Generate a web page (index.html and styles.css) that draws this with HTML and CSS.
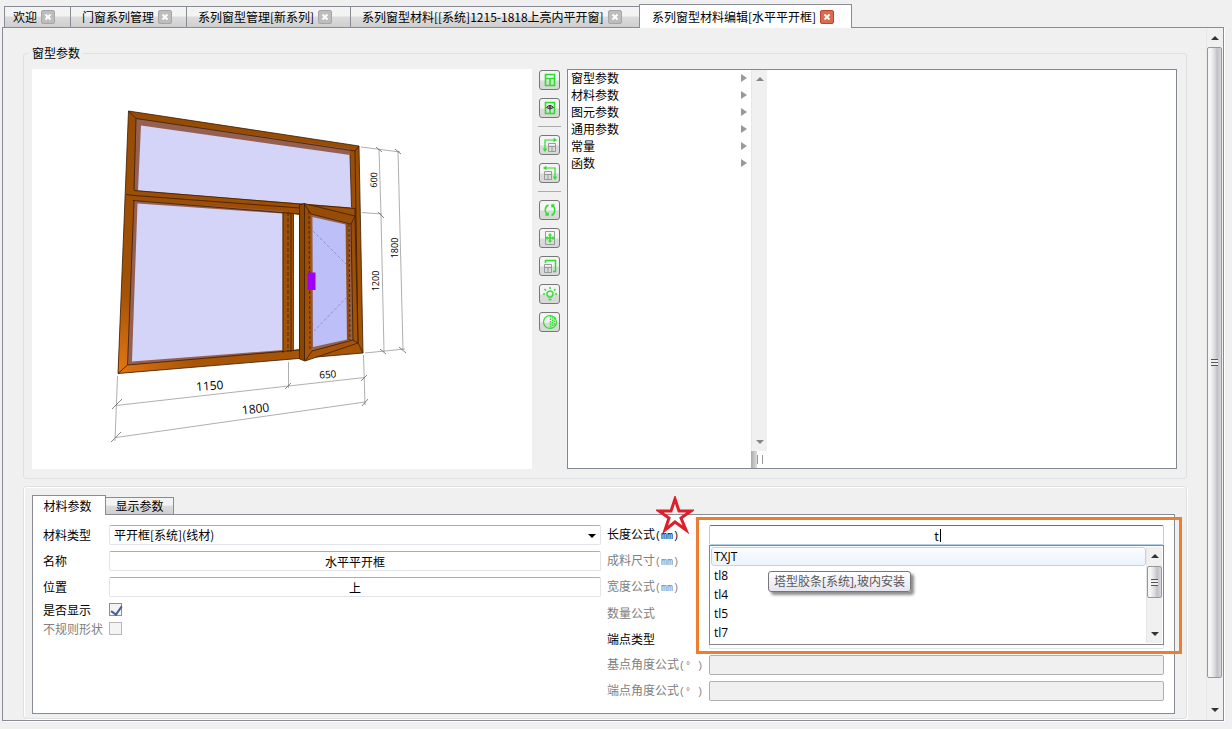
FILE: index.html
```
<!DOCTYPE html>
<html lang="zh-CN">
<head>
  <meta charset="UTF-8">
  <meta name="viewport" content="width=device-width, initial-scale=1.0">
  <title>系列窗型材料编辑</title>
  <link rel="stylesheet" href="styles.css">
</head>
<body>
  <nav class="tabs">
    <div class="tab"><a href="#">欢迎</a><button class="close" aria-label="关闭"><svg viewBox="0 0 12 12"><path d="M3.500 3.500l5 5M8.500 3.500l-5 5"/></svg></button></div>
    <div class="tab"><a href="#">门窗系列管理</a><button class="close" aria-label="关闭"><svg viewBox="0 0 12 12"><path d="M3.500 3.500l5 5M8.500 3.500l-5 5"/></svg></button></div>
    <div class="tab"><a href="#">系列窗型管理[新系列]</a><button class="close" aria-label="关闭"><svg viewBox="0 0 12 12"><path d="M3.500 3.500l5 5M8.500 3.500l-5 5"/></svg></button></div>
    <div class="tab"><a href="#">系列窗型材料[[系统]1215-1818上亮内平开窗]</a><button class="close" aria-label="关闭"><svg viewBox="0 0 12 12"><path d="M3.500 3.500l5 5M8.500 3.500l-5 5"/></svg></button></div>
    <div class="tab active"><a href="#">系列窗型材料编辑[水平平开框]</a><button class="close" aria-label="关闭"><svg viewBox="0 0 12 12"><path d="M3.500 3.500l5 5M8.500 3.500l-5 5"/></svg></button></div>
  </nav>

  <main class="page">
    <div class="content">
      <fieldset class="group">
        <legend>窗型参数</legend>
        <div class="designer">
          <!-- 窗型预览 -->
          <svg class="preview" viewBox="32 69 500 400">
            <defs>
              <linearGradient id="wood" x1="0" y1="0" x2="0" y2="1">
                <stop offset="0" stop-color="#964b05"/>
                <stop offset="1" stop-color="#a85508"/>
              </linearGradient>
              <radialGradient id="shine" gradientUnits="userSpaceOnUse" cx="118" cy="368" r="75">
                <stop offset="0" stop-color="#e07414"/>
                <stop offset="1" stop-color="#e07414" stop-opacity="0"/>
              </radialGradient>
            </defs>
            <!-- frame -->
            <path fill="url(#wood)" d="M128.500 111L359 146 363 353 305 358 118 373.500Z"/>
            <path fill="url(#shine)" d="M128.500 111L359 146 363 353 305 358 118 373.500Z"/>
            <path fill="#95604f" d="M136 118.500L350 149 352 207 134.500 190Z"/>
            <path fill="#d4d4f8" d="M141 125.500L350 155 351.500 207.500 138 190.500Z"/>
            <path fill="#95604f" d="M134 200.500L283 211 283 351 127.500 365Z"/>
            <path fill="#d4d4f8" d="M137.500 203.500L282.500 213.500 282.500 350 132 361.500Z"/>
            <path fill="#fff" d="M293.500 214L299 215 299 349 293 350Z"/>
            <g fill="none" stroke="#3a1c00" stroke-width=".8">
              <path d="M128.500 111L359 146 363 353 305 358 118 373.500Z"/>
              <path d="M136 118.500L355 151 358 343 363 353M128.500 111L136 118.500 134 190M134 200L127.500 365 118 373.500M355 151L359 146M350 155L351.500 207"/>
              <path d="M134 190.500L355 208.500M126 194.500L134 195.500 300 208M133 200.500L299 214M127.500 365L299 350M283 212V353M291 213V352M293.500 214V351"/>
              <path stroke-dasharray="4 2" d="M288 212V352"/>
            </g>
            <!-- sash -->
            <path fill="#8a4503" d="M299.500 205L305 203.500 305 361 299.500 359Z"/>
            <path fill="url(#wood)" d="M304 203.500L355 216 358 343 305 361Z"/>
            <path fill="#95604f" d="M311 214L351 223 353 340 312 351Z"/>
            <path fill="#964b05" d="M346 223L348.500 223 349.500 340 347 340Z"/>
            <path fill="#bcbff8" d="M312.500 217L345.500 224.500 347 339.500 313 347Z"/>
            <g fill="none" stroke="#3a1c00" stroke-width=".8">
              <path d="M299.500 205L304 203.500 355 216 358 343 305 361 299.500 359Z"/>
              <path d="M304.500 204V360M304 203.500L311 214 351 224 353 340 312 351 305 361M351 224L355 216M353 340L358 343M355 208L355 216"/>
              <path stroke-dasharray="3 2" d="M309 211L310 351M349 224L350 340"/>
              <path stroke="#8585c5" stroke-dasharray="3 2" d="M313 231L346 264M347 297L314 331"/>
            </g>
            <path fill="#a000f5" d="M307.500 272.500H315.500V290H307.500Z"/>
            <!-- dimension lines -->
            <g fill="none" stroke="#9a9a9a" stroke-width=".8">
              <path d="M361 147L400 152M379 149L381 215 384 352M398 151L403 350M362 212.500L382 214M365 353L405 349"/>
              <path d="M117.500 376L115 441M288.500 362V388M363.500 355L365 405M116 405.500L288.500 386 364.500 377.500M116 437.500L365 402"/>
            </g>
            <g fill="none" stroke="#666" stroke-width=".8">
              <path d="M376 147L382 152M395 149L401 154M378 212L384 218M380 349L386 354M399 347L406 353"/>
              <path d="M112 409L122 399M111 442L121 432M285 389L291 383M361 381L367 375M362 406L368 399"/>
            </g>
            <g class="dims" text-anchor="middle">
              <text transform="translate(210 390) rotate(-4)">1150</text>
              <text transform="translate(256 413) rotate(-6)">1800</text>
              <text class="small" transform="translate(328 378) rotate(-4)">650</text>
              <text class="mini" transform="translate(377 180) rotate(-88)">600</text>
              <text class="mini" transform="translate(398 248) rotate(-90)">1800</text>
              <text class="mini" transform="translate(379 281) rotate(-90)">1200</text>
            </g>
          </svg>

          <div class="toolbar">
            <button aria-label="窗型"><svg viewBox="0 0 16 16"><path stroke-width="1.600" d="M3.500 2.500h9v11h-9zM3.500 6.500h9M8 6.500v7"/></svg></button>
            <button aria-label="查看"><svg viewBox="0 0 16 16"><path stroke-width="1.600" d="M3.500 2.500h9v11h-9zM8 9v4"/><path class="black" d="M4.500 7.500q3.500-4 7 0-3.500 3-7 0z"/><circle class="black" cx="8" cy="7" r="1"/></svg></button>
            <hr>
            <button aria-label="左对齐"><svg viewBox="0 0 16 16"><path d="M14 3H3v11M1.500 11.500L3 14l1.500-2.500M11.500 1.500L14 3l-2.500 1.500"/><path class="gray" d="M6.500 6.500h7v8h-7zM6.500 9.500h7M10 9.500v5"/></svg></button>
            <button aria-label="右对齐"><svg viewBox="0 0 16 16"><path d="M2 3h11v11M11.500 11.500L13 14l1.500-2.500M4.500 1.500L2 3l2.500 1.500"/><path class="gray" d="M2.500 6.500h7v8h-7zM2.500 9.500h7M6 9.500v5"/></svg></button>
            <hr>
            <button aria-label="旋转"><svg viewBox="0 0 16 16"><path stroke-width="1.500" d="M6.500 3C2.500 4.500 2.500 10 5 12.500M9.500 13.500c4-1.500 4-7.500 1.500-10M3.500 13h2.500v-2.500M12.500 3h-2.500v2.500"/></svg></button>
            <button aria-label="移动"><svg viewBox="0 0 16 16"><path class="gray" d="M3.500 1.500h9v13h-9z"/><path stroke-width="1.500" d="M8 5v6M4 8h8"/><path class="fill" d="M8 3l2 2.500H6zM8 13l-2-2.500h4zM3 8l2.500-2v4zM13 8l-2.500-2v4z"/></svg></button>
            <button aria-label="缩放"><svg viewBox="0 0 16 16"><path stroke-width="1.500" d="M3.500 5V2.500h10v11H11"/><path class="gray" d="M2.500 6.500h7v8h-7zM2.500 9.500h7M6 9.500v5"/></svg></button>
            <button aria-label="灯光"><svg viewBox="0 0 16 16"><path stroke-width="1.500" d="M6.500 11C3.500 8.500 5 5 8 5s4.500 3.500 1.500 6zM6.500 13.500h3M8 1v2M2.500 3L4 4.500M13.500 3L12 4.500M1 8h2M13 8h2"/></svg></button>
            <button aria-label="材质"><svg viewBox="0 0 16 16"><circle cx="8" cy="8" r="6.500"/><path stroke-width="1.500" stroke-dasharray="1.500 1" d="M8.500 2v12M10.500 3v10.500M12.500 4v8"/></svg></button>
          </div>

          <div class="browser">
            <ul class="column">
              <li>窗型参数<i></i></li>
              <li>材料参数<i></i></li>
              <li>图元参数<i></i></li>
              <li>通用参数<i></i></li>
              <li>常量<i></i></li>
              <li>函数<i></i></li>
            </ul>
            <div class="column-side">
              <div class="track muted"><span class="arrow up"></span><span class="arrow down"></span></div>
              <div class="grip"></div>
            </div>
          </div>
        </div>
      </fieldset>

      <section class="group params">
        <div class="subtabs">
          <button class="active">材料参数</button>
          <button>显示参数</button>
        </div>
        <form class="form">
          <div class="fields left">
            <label for="type">材料类型</label>
            <div class="select"><select id="type"><option>平开框[系统](线材)</option></select></div>
            <label for="name">名称</label>
            <input type="text" id="name" value="水平平开框">
            <label for="pos">位置</label>
            <input type="text" id="pos" value="上">
            <label class="tick" for="show">是否显示</label>
            <input class="tick" type="checkbox" id="show" checked>
            <label class="tick off" for="irregular">不规则形状</label>
            <input class="tick" type="checkbox" id="irregular" disabled>
          </div>
          <div class="fields right">
            <label for="length">长度公式<span class="unit">(mm)</span></label>
            <div class="combo">
              <input type="text" id="length" value="t">
              <span class="caret"></span>
              <div class="popup">
                <ul>
                  <li class="current">TXJT</li>
                  <li>tl8</li>
                  <li>tl4</li>
                  <li>tl5</li>
                  <li>tl7</li>
                </ul>
                <div class="track"><span class="arrow up"></span><span class="thumb"></span><span class="arrow down"></span></div>
                <div class="tooltip">塔型胶条[系统],玻内安装</div>
              </div>
              <div class="highlight"></div>
              <svg class="star" viewBox="0 0 38 38"><path d="M19 3l4 12h12l-10 7 5 12-11-8-10 8 4-12-10-7h12z"/></svg>
            </div>
            <label class="off" for="size">成料尺寸<span class="unit">(mm)</span></label>
            <input type="text" id="size" disabled>
            <label class="off" for="width">宽度公式<span class="unit">(mm)</span></label>
            <input type="text" id="width" disabled>
            <label class="off" for="count">数量公式</label>
            <input type="text" id="count" disabled>
            <label for="end">端点类型</label>
            <input type="text" id="end">
            <label class="off" for="base-angle">基点角度公式<span class="unit">(°&nbsp;)</span></label>
            <input type="text" id="base-angle" disabled>
            <label class="off" for="end-angle">端点角度公式<span class="unit">(°&nbsp;)</span></label>
            <input type="text" id="end-angle" disabled>
          </div>
        </form>
      </section>
    </div>
    <div class="track page-track"><span class="arrow up"></span><span class="thumb"></span><span class="arrow down"></span></div>
  </main>
</body>
</html>
```

FILE: styles.css
```
* {
  margin: 0;
  padding: 0;
  box-sizing: border-box;
}

body {
  display: flex;
  flex-direction: column;
  min-height: 100vh;
  padding: 4px 8px 8px 2px;
  background: #f0f0f0;
  color: #000;
  font-family: 'Noto Sans CJK SC', sans-serif;
  font-size: 12px;
  line-height: 16px;
}

button,
input,
select {
  font: inherit;
  color: inherit;
}

ul {
  list-style: none;
}

/* document tabs */
.tabs {
  display: grid;
  grid-template-columns: 66px 116px 164px 289px 213px;
  align-items: end;
  height: 24px;
  padding-left: 2px;
  position: relative;
  z-index: 1;
}

.tab {
  display: flex;
  align-items: center;
  gap: 4px;
  height: 22px;
  padding-left: 8px;
  border: 1px solid #898c95;
  border-right-width: 0;
  background: linear-gradient(#f3f3f3 45%, #dcdcdc 50%, #cfcfcf);
  white-space: nowrap;
}

.tab + .tab {
  padding-left: 11px;
}

.tab a {
  color: #000;
  text-decoration: none;
}

.tab.active {
  height: 24px;
  padding-left: 12px;
  border-right-width: 1px;
  border-bottom: 0;
  background: #fff;
}

.close {
  width: 14px;
  height: 14px;
  border: 1px solid #a5a5a5;
  border-radius: 2px;
  background: #bdbdbd;
}

.close svg {
  display: block;
  width: 12px;
  height: 12px;
  fill: none;
  stroke: #fff;
  stroke-width: 2;
}

.tab.active .close {
  border-color: #b8482f;
  background: #dc6b4c;
}

/* page */
.page {
  display: flex;
  flex: 1;
  margin-top: -1px;
  padding: 1px;
  border: 1px solid #898c95;
  box-shadow: 1px 1px 0 #fff;
}

.content {
  flex: 1;
  min-width: 0;
  padding: 16px 19px 0 19px;
}

.group {
  border: 1px solid #dde1e4;
  border-radius: 3px;
  box-shadow: inset 1px 1px 0 #fff, 1px 1px 0 #fff;
  min-width: 0;
}

.group legend {
  margin-left: -3px;
  padding: 0 3px;
}

fieldset.group {
  padding: 8px 9px 9px 8px;
  box-shadow: none;
}

.designer {
  display: flex;
  height: 400px;
}

.preview {
  flex: none;
  width: 500px;
  height: 400px;
  background: #fff;
}

.dims {
  font-family: 'Open Sans', sans-serif;
  font-size: 12px;
}

.dims .small {
  font-size: 10px;
}

.dims .mini {
  font-size: 9px;
}

.toolbar {
  display: flex;
  flex-direction: column;
  align-items: center;
  gap: 8px;
  width: 35px;
  padding-top: 1px;
}

.toolbar button {
  display: flex;
  align-items: center;
  justify-content: center;
  width: 21px;
  height: 20px;
  padding: 0;
  border: 1px solid #777;
  border-radius: 3px;
  background: linear-gradient(#f4f4f4 50%, #dadada 55%, #d8d8d8);
}

.toolbar svg {
  flex: none;
  width: 16px;
  height: 16px;
  fill: none;
  stroke: #2be02b;
  stroke-width: 1.2;
}

.toolbar .gray {
  stroke: #999;
  stroke-width: 1;
}

.toolbar .black {
  stroke: #222;
  stroke-width: 1;
}

.toolbar .fill {
  fill: #2be02b;
  stroke: none;
}

.toolbar hr {
  width: 23px;
  height: 1px;
  border: 0;
  background: #aaa;
}

.browser {
  display: flex;
  flex: 1;
  border: 1px solid #828790;
  background: #fff;
}

.column {
  width: 183px;
}

.column li {
  display: flex;
  align-items: center;
  justify-content: space-between;
  height: 17px;
  padding: 0 4px 1px 3px;
}

.column i {
  border: 4px solid transparent;
  border-left: 6px solid #999;
  border-right: 0;
}

.column-side {
  display: flex;
  flex-direction: column;
  width: 16px;
}

.column-side .track {
  flex: 1;
}

.grip {
  width: 12px;
  height: 17px;
  background:
    linear-gradient(#999, #999) 6px 4px / 1px 9px no-repeat,
    linear-gradient(#999, #999) 11px 4px / 1px 9px no-repeat,
    linear-gradient(90deg, #aaa, #ddd) 0 0 / 6px 17px no-repeat;
}

/* scroll bars */
.track {
  display: flex;
  flex-direction: column;
  align-items: center;
  justify-content: space-between;
  width: 16px;
  background: #f0f0f0;
  border-left: 1px solid #e6e6e6;
}

.arrow {
  margin: 7px 0;
  border: 4px solid transparent;
}

.arrow.up {
  border-top: 0;
  border-bottom-color: #333;
}

.arrow.down {
  border-bottom: 0;
  border-top-color: #333;
}

.muted .arrow.up {
  border-bottom-color: #888;
}

.muted .arrow.down {
  border-top-color: #888;
}

.thumb {
  width: 15px;
  height: 32px;
  border: 1px solid #979797;
  border-radius: 2px;
  background:
    repeating-linear-gradient(#555 0 1px, #eee 1px 3px) center / 7px 7px no-repeat,
    linear-gradient(90deg, #f5f5f5 20%, #dcdce0 50%, #c0c0c8 70%, #d8d8dc);
}

.page-track .thumb {
  flex: 1;
}

.page-track .arrow.down {
  margin-top: 30px;
}

/* lower panel */
.params {
  margin-top: 7px;
  padding: 8px 11px 4px 8px;
}

.subtabs {
  display: flex;
  align-items: flex-end;
  height: 20px;
  position: relative;
  z-index: 1;
}

.subtabs button {
  width: 68px;
  height: 18px;
  border: 1px solid #898c95;
  border-left: 0;
  background: linear-gradient(#f3f3f3 45%, #dcdcdc 50%, #cfcfcf);
}

.subtabs button.active {
  width: 74px;
  height: 20px;
  padding-right: 3px;
  border-left: 1px solid #898c95;
  border-bottom: 0;
  background: #fff;
}

.form {
  display: grid;
  grid-template-columns: minmax(0, 558fr) minmax(0, 557fr);
  gap: 6px;
  margin-top: -1px;
  min-height: 200px;
  padding: 10px;
  border: 1px solid #898c95;
  background: #fff;
}

.fields {
  display: grid;
  grid-template-columns: 66px minmax(0, 1fr);
  gap: 6px 0;
  align-content: start;
  align-items: center;
}

.fields.right {
  grid-template-columns: 102px minmax(0, 1fr);
}

.fields label {
  white-space: nowrap;
}

.off {
  color: #808080;
}

.unit {
  font-family: 'Liberation Mono', monospace;
  font-size: 10px;
}

.fields input[type="text"],
.fields select {
  display: block;
  width: 100%;
  height: 20px;
  border: 1px solid #e2e3ea;
  border-top-color: #abadb3;
  border-radius: 2px;
  background: #fff;
  text-align: center;
}

.fields input[type="text"]:disabled {
  border-color: #afafaf;
  background: #f0f0f0;
}

.select {
  position: relative;
}

.fields select {
  appearance: none;
  padding-left: 4px;
  text-align: left;
}

.select::after {
  content: '';
  position: absolute;
  top: 9px;
  right: 5px;
  border: 4px solid transparent;
  border-top-color: #000;
  border-bottom: 0;
}

.fields .tick {
  height: 13px;
  line-height: 13px;
}

input[type="checkbox"] {
  appearance: none;
  width: 13px;
  border: 1px solid #8e8f8f;
  background: #f4f4f4;
}

input[type="checkbox"]:checked::before {
  content: '';
  display: block;
  width: 5px;
  height: 9px;
  margin: 0 0 0 3px;
  border: solid #4a5f97;
  border-width: 0 2px 2px 0;
  transform: rotate(35deg);
}

input[type="checkbox"]:disabled {
  border-color: #b8b8b8;
}

/* formula completion */
.combo {
  position: relative;
  z-index: 2;
}

.fields .combo input[type="text"] {
  border-color: #b5cfe7;
  border-top-color: #3d7bad;
}

.caret {
  position: absolute;
  top: 4px;
  left: calc(50% + 3px);
  width: 1px;
  height: 13px;
  background: #000;
}

.popup {
  display: flex;
  position: absolute;
  top: 20px;
  left: 0;
  right: 0;
  height: 100px;
  padding: 1px;
  border: 1px solid #828790;
  background: #fff;
  font-family: 'Open Sans', 'Noto Sans CJK SC', sans-serif;
  font-kerning: none;
}

.popup ul {
  flex: 1;
}

.popup li {
  height: 19px;
  padding: 0 3px;
  line-height: 19px;
}

.popup .current {
  border: 1px solid #b8d6fb;
  border-radius: 3px;
  padding: 0 2px;
  background: linear-gradient(#fbfdff, #ebf3fd);
  line-height: 17px;
}

.popup .track {
  justify-content: flex-start;
}

.popup .thumb {
  margin-top: 1px;
}

.popup .arrow.down {
  margin-top: auto;
}

.tooltip {
  position: absolute;
  top: 25px;
  left: 58px;
  height: 21px;
  padding: 0 5px;
  border: 1px solid #767676;
  border-radius: 3px;
  background: linear-gradient(#fff, #e4e5f0);
  box-shadow: 3px 3px 3px rgba(0, 0, 0, 0.45);
  color: #575757;
  line-height: 19px;
  white-space: nowrap;
}

.highlight {
  position: absolute;
  top: -8px;
  left: -13px;
  right: -18px;
  height: 137px;
  border: 3px solid #ed7d31;
}

.star {
  position: absolute;
  top: -29px;
  left: -53px;
  width: 38px;
  height: 38px;
  fill: none;
  stroke: #dc1f2b;
  stroke-width: 3;
}
```
